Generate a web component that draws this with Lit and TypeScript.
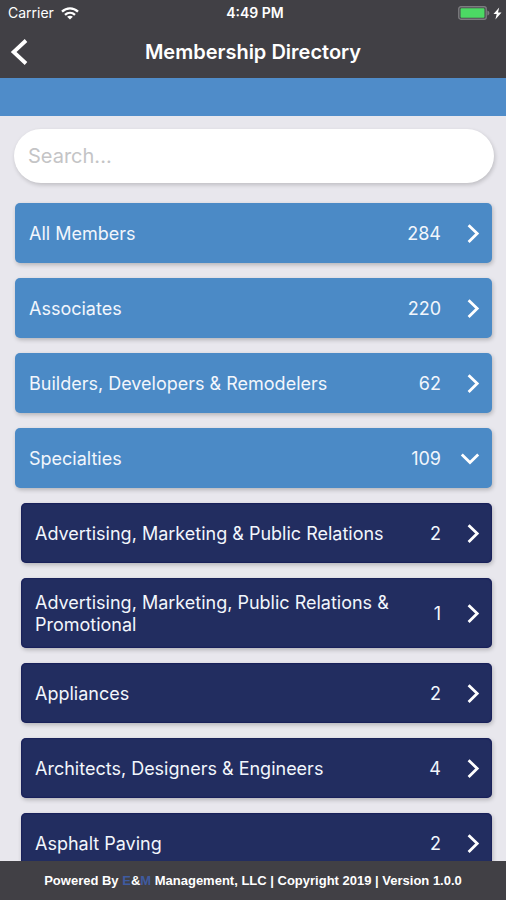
import { LitElement, html, css, svg, nothing } from "lit";
import { customElement, property } from "lit/decorators.js";
import { classMap } from "lit/directives/class-map.js";

interface Entry {
  name: string;
  count: number;
  children?: Entry[];
}

const DIRECTORY: Entry[] = [
  { name: "All Members", count: 284 },
  { name: "Associates", count: 220 },
  { name: "Builders, Developers & Remodelers", count: 62 },
  {
    name: "Specialties",
    count: 109,
    children: [
      { name: "Advertising, Marketing & Public Relations", count: 2 },
      { name: "Advertising, Marketing, Public Relations & Promotional", count: 1 },
      { name: "Appliances", count: 2 },
      { name: "Architects, Designers & Engineers", count: 4 },
      { name: "Asphalt Paving", count: 2 },
    ],
  },
];

@customElement("status-bar")
export class StatusBar extends LitElement {
  static styles = css`
    :host {
      display: grid;
      grid-template-columns: 1fr auto 1fr;
      align-items: center;
      height: 26px;
      padding: 0 4px 0 8px;
      font-size: 14px;
      line-height: 16px;
    }
    .carrier {
      display: flex;
      align-items: center;
      gap: 7px;
    }
    .time {
      font-weight: 600;
    }
    .power {
      display: flex;
      align-items: center;
      justify-content: flex-end;
      gap: 3px;
    }
    svg {
      display: block;
    }
  `;

  render() {
    return html`
      <div class="carrier">
        <span>Carrier</span>
        <svg width="18" height="13" viewBox="0 0 18 13" aria-label="Wi-Fi">
          <g fill="none" stroke="#fff" stroke-width="2.3">
            <path d="M1 4.6C5.6.2 12.4.2 17 4.6" />
            <path d="M4 7.8c2.9-2.7 7.1-2.7 10 0" />
          </g>
          <path d="M9 12.6 6.1 9.8c1.7-1.4 4.1-1.4 5.8 0z" fill="#fff" />
        </svg>
      </div>
      <span class="time">4:49 PM</span>
      <div class="power">
        <svg width="32" height="14" viewBox="0 0 32 14" aria-label="Battery charging">
          <rect x=".8" y=".8" width="27.4" height="12.4" rx="2" fill="none" stroke="#7d7d80" stroke-width="1.4" />
          <rect x="2.5" y="2.3" width="24" height="9.4" rx=".8" fill="#4cd964" />
          <path d="M29.4 4.4c2.6 1 2.6 4.2 0 5.2z" fill="#7d7d80" />
        </svg>
        <svg width="9" height="13" viewBox="0 0 9 13" aria-hidden="true">
          <path d="M6.2.4.5 7.1h3.2L2.4 12.6 8.5 5.4H5z" fill="#fff" />
        </svg>
      </div>
    `;
  }
}

@customElement("directory-row")
export class DirectoryRow extends LitElement {
  @property() name = "";
  @property({ type: Number }) count = 0;
  @property({ type: Boolean }) nested = false;
  @property({ type: Boolean }) open = false;

  static styles = css`
    :host {
      display: block;
    }
    .row {
      display: flex;
      align-items: center;
      box-sizing: border-box;
      width: 100%;
      min-height: 60px;
      margin: 0;
      padding: 14px 12px 12px 14px;
      border: 0;
      border-radius: 5px;
      background: #4b8ac6;
      box-shadow: 1px 2px 4px rgba(0, 0, 0, 0.22);
      color: #f2f6fc;
      font: inherit;
      text-align: left;
      cursor: pointer;
    }
    .nested {
      background: #222d60;
      box-shadow:
        inset 0 0 2px #00004c,
        1px 2px 4px rgba(0, 0, 0, 0.22);
    }
    .name {
      flex: 1;
    }
    .count {
      padding: 0 19px 0 24px;
    }
    svg {
      display: block;
      flex: none;
    }
  `;

  render() {
    const arrow = this.open ? svg`<path d="m1.8 5.5 8.2 8 8.2-8" />` : svg`<path d="m8.6 1.2 8.6 8.4-8.6 8.4" />`;
    return html`
      <button
        type="button"
        class=${classMap({ row: true, nested: this.nested })}
        aria-expanded=${this.open ? "true" : nothing}
      >
        <span class="name">${this.name}</span>
        <span class="count">${this.count}</span>
        <svg width="20" height="20" viewBox="0 0 20 20" aria-hidden="true" fill="none" stroke="#fff" stroke-width="2.8">
          ${arrow}
        </svg>
      </button>
    `;
  }
}

@customElement("app-root")
export class AppRoot extends LitElement {
  static styles = css`
    :host {
      display: flex;
      flex-direction: column;
      height: 100vh;
      background: #e8e7ed;
      color: #fff;
      font-family: Inter, Roboto, "Liberation Sans", sans-serif;
      font-size: 18px;
      line-height: 22px;
    }
    .top {
      flex: none;
      background: #414045;
    }
    .nav {
      display: grid;
      grid-template-columns: 40px 1fr 40px;
      align-items: center;
      height: 52px;
    }
    .back {
      display: flex;
      align-items: center;
      height: 52px;
      padding: 0 0 0 10px;
      border: 0;
      background: none;
      cursor: pointer;
    }
    .title {
      margin: 0;
      font-size: 20px;
      line-height: 24px;
      font-weight: 600;
      text-align: center;
    }
    .band {
      flex: none;
      height: 38px;
      background: #4f8cc9;
    }
    .content {
      flex: 1;
      min-height: 0;
      overflow-y: auto;
      scrollbar-width: none;
      padding: 13px 12px 16px 14px;
    }
    .search {
      display: block;
      box-sizing: border-box;
      width: 100%;
      height: 54px;
      margin: 0 0 20px;
      padding: 0 14px;
      border: 0;
      border-radius: 27px;
      outline: 0;
      background: #fff;
      box-shadow: 1px 2px 4px rgba(0, 0, 0, 0.18);
      color: #333;
      font: inherit;
      font-size: 20px;
    }
    .search::placeholder {
      color: #c4c4c6;
      opacity: 1;
    }
    .list {
      display: flex;
      flex-direction: column;
      gap: 15px;
      margin: 0;
      padding: 0 2px 0 1px;
      list-style: none;
    }
    .list .sub {
      margin-top: 15px;
      padding: 0 0 0 6px;
    }
    .footer {
      flex: none;
      padding: 12px 8px 11px;
      background: #414045;
      font: bold 13px/16px "Liberation Sans", Arial, sans-serif;
      text-align: center;
    }
    .brand {
      color: #3f5ba0;
    }
  `;

  private renderList(entries: Entry[], nested = false): unknown {
    return html`
      <ul class=${classMap({ list: true, sub: nested })}>
        ${entries.map(
          (e) => html`
            <li>
              <directory-row
                .name=${e.name}
                .count=${e.count}
                .nested=${nested}
                .open=${Boolean(e.children)}
              ></directory-row>
              ${e.children ? this.renderList(e.children, true) : nothing}
            </li>
          `,
        )}
      </ul>
    `;
  }

  render() {
    return html`
      <header class="top">
        <status-bar></status-bar>
        <div class="nav">
          <button class="back" type="button" aria-label="Back">
            <svg width="18" height="26" viewBox="0 0 18 26" fill="none" stroke="#fff" stroke-width="3.8" aria-hidden="true">
              <path d="M16 1.5 3.6 13 16 24.5" />
            </svg>
          </button>
          <h1 class="title">Membership Directory</h1>
        </div>
      </header>
      <div class="band"></div>
      <main class="content">
        <input class="search" type="search" placeholder="Search..." aria-label="Search members" />
        ${this.renderList(DIRECTORY)}
      </main>
      <footer class="footer">
        Powered By <span class="brand">E</span>&amp;<span class="brand">M</span> Management, LLC | Copyright 2019 |
        Version 1.0.0
      </footer>
    `;
  }
}
